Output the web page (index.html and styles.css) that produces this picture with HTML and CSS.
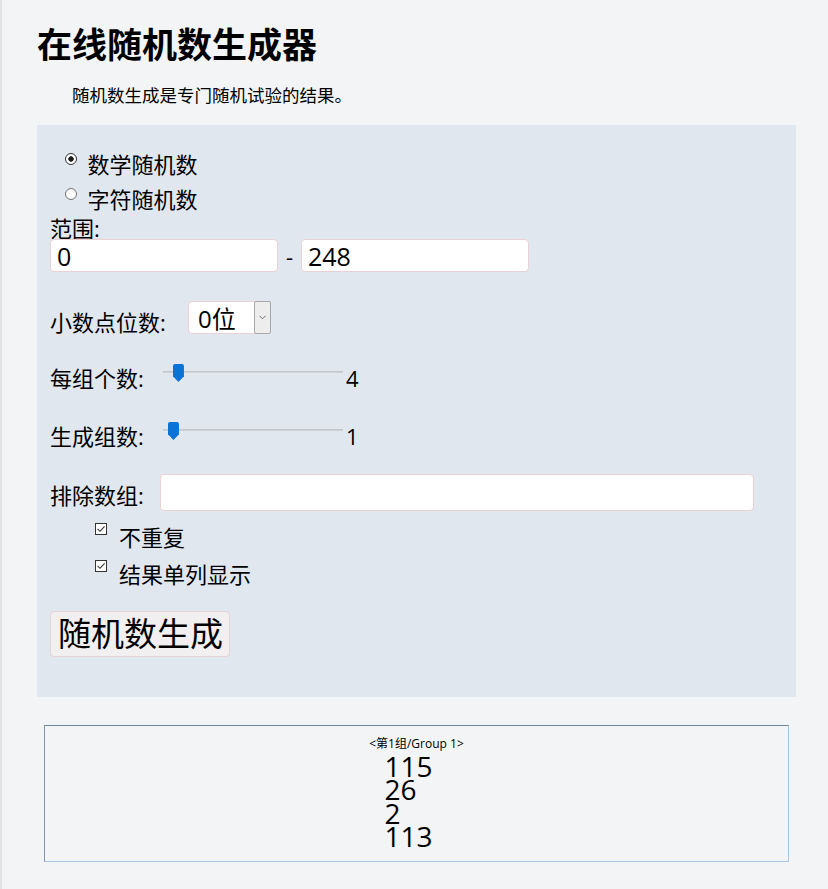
FILE: index.html
```html
<!DOCTYPE html>
<html lang="zh-CN">
<head>
<meta charset="utf-8">
<title>在线随机数生成器</title>
<link rel="stylesheet" href="styles.css">
</head>
<body>
<div class="page">
  <div class="wrap">
    <h1 class="title">在线随机数生成器</h1>
    <p class="intro">随机数生成是专门随机试验的结果。</p>
    <form class="panel">
      <label class="radio-row"><input type="radio" name="kind" class="radio" checked><span>数学随机数</span></label>
      <label class="radio-row"><input type="radio" name="kind" class="radio"><span>字符随机数</span></label>
      <div class="range-label">范围:</div>
      <div class="range-row">
        <input class="field field-range" value="0">
        <span class="dash">-</span>
        <input class="field field-range" value="248">
      </div>
      <div class="row row-select">
        <span class="lbl lbl-select">小数点位数:</span>
        <span class="select-wrap">
          <select class="select"><option>0位</option></select>
          <span class="select-btn"><svg width="7" height="5" viewBox="0 0 7 5"><path d="M0.5 0.8 L3.5 3.8 L6.5 0.8" fill="none" stroke="#6a6a6a" stroke-width="1"/></svg></span>
        </span>
      </div>
      <div class="row row-slider">
        <span class="lbl lbl-slider">每组个数:</span>
        <input type="range" class="slider" min="0" max="68" value="4">
        <span class="val">4</span>
      </div>
      <div class="row row-slider2">
        <span class="lbl lbl-slider">生成组数:</span>
        <input type="range" class="slider" min="0" max="34" value="1">
        <span class="val">1</span>
      </div>
      <div class="row row-exclude">
        <span class="lbl lbl-exclude">排除数组:</span>
        <input class="field field-wide" value="">
      </div>
      <label class="check-row check-first"><input type="checkbox" class="hidden-input" checked><span class="box"><svg width="10" height="10" viewBox="0 0 10 10"><path d="M1.5 4.8 L4 7.3 L8.6 2.4" fill="none" stroke="#333" stroke-width="1.1"/></svg></span><span>不重复</span></label>
      <label class="check-row"><input type="checkbox" class="hidden-input" checked><span class="box"><svg width="10" height="10" viewBox="0 0 10 10"><path d="M1.5 4.8 L4 7.3 L8.6 2.4" fill="none" stroke="#333" stroke-width="1.1"/></svg></span><span>结果单列显示</span></label>
      <button type="button" class="btn">随机数生成</button>
    </form>
    <div class="result">
      <div class="group">&lt;第1组/Group 1&gt;</div>
      <div class="nums">
        <div>115</div>
        <div>26</div>
        <div>2</div>
        <div>113</div>
      </div>
    </div>
  </div>
</div>
</body>
</html>
```
FILE: styles.css
```css
html, body {
  margin: 0;
  background: #f3f4f6;
}
body {
  font-family: "Open Sans", "Noto Sans CJK SC", sans-serif;
  color: #000;
}
.page {
  border-left: 2px solid #e1e2e4;
  min-height: 889px;
  padding-left: 35px;
  box-sizing: border-box;
}
.wrap {
  width: 759px;
}
.title {
  margin: 0;
  padding-top: 25px;
  font-size: 35px;
  line-height: 40px;
  font-weight: 700;
}
.intro {
  margin: 17.5px 0 0 35px;
  font-size: 17.5px;
  line-height: 24px;
}
.panel {
  margin-top: 18.5px;
  background: #e1e7ef;
  padding: 22px 0 40px 13px;
}
.radio-row {
  display: flex;
  align-items: flex-start;
  height: 35px;
  font-size: 22px;
  line-height: 35px;
}
.radio {
  appearance: none;
  -webkit-appearance: none;
  box-sizing: border-box;
  width: 12px;
  height: 12px;
  margin: 5.5px 11px 0 14.5px;
  border: 1px solid #707070;
  border-radius: 50%;
  background: #fff;
}
.radio:checked {
  border-color: #333;
  background: radial-gradient(circle, #1c1c1c 0 2.4px, #fff 3px);
}
.range-label {
  font-size: 22px;
  line-height: 22px;
  height: 22px;
}
.range-row {
  display: flex;
  align-items: center;
}
.field {
  box-sizing: border-box;
  height: 33px;
  border: 1px solid #ebd0d4;
  border-radius: 4px;
  background: #fff;
  font-family: inherit;
  font-size: 25px;
  padding: 0 6px;
  color: #000;
  outline: none;
}
.field-range {
  width: 228px;
}
.dash {
  font-size: 22px;
  width: 7px;
  margin: 0 8px;
}
.row {
  display: flex;
  align-items: center;
  font-size: 22px;
}
.lbl {
  line-height: 22px;
  white-space: nowrap;
}
.row-select {
  margin-top: 29px;
  height: 33px;
}
.lbl-select {
  width: 138px;
  margin-top: 9px;
}
.select-wrap {
  position: relative;
  width: 83px;
  height: 33px;
}
.select {
  appearance: none;
  -webkit-appearance: none;
  box-sizing: border-box;
  width: 100%;
  height: 100%;
  border: 1px solid #ebd0d4;
  border-radius: 4px;
  background: #fff;
  font-family: inherit;
  font-size: 24px;
  padding: 0 0 0 9px;
  color: #000;
  outline: none;
}
.select-btn {
  position: absolute;
  right: 0;
  top: 0;
  bottom: 0;
  width: 17px;
  box-sizing: border-box;
  border: 1px solid #a9a9a9;
  border-radius: 2px;
  background: #ededed;
  display: flex;
  align-items: center;
  justify-content: center;
  pointer-events: none;
}
.row-slider {
  margin-top: 29px;
}
.row-slider2 {
  margin-top: 28px;
}
.lbl-slider {
  width: 113px;
}
.slider {
  appearance: none;
  -webkit-appearance: none;
  width: 180px;
  height: 18px;
  margin: 0 0 12px 0;
  padding: 0;
  background: transparent;
}
.slider::-webkit-slider-runnable-track {
  height: 2px;
  background: #cfd3d8;
  border-top: 1px solid #c3c7cc;
  box-sizing: border-box;
}
.slider::-webkit-slider-thumb {
  -webkit-appearance: none;
  appearance: none;
  width: 11px;
  height: 18px;
  margin-top: -8px;
  background: #0a73d5;
  border-radius: 2px 2px 0 0;
  clip-path: polygon(0 0, 100% 0, 100% 68%, 50% 100%, 0 68%);
}
.val {
  margin-left: 3px;
  font-size: 22px;
}
.row-exclude {
  margin-top: 23px;
}
.lbl-exclude {
  width: 110px;
  margin-top: 5px;
}
.field-wide {
  width: 594px;
  height: 37px;
}
.check-row {
  display: flex;
  align-items: flex-start;
  height: 37px;
  line-height: 37px;
  font-size: 22px;
  margin-left: 45px;
}
.check-first {
  margin-top: 7.5px;
}
.hidden-input {
  position: absolute;
  opacity: 0;
  width: 0;
  height: 0;
  margin: 0;
}
.box {
  box-sizing: border-box;
  width: 12px;
  height: 12px;
  margin: 4.5px 12px 0 0;
  border: 1px solid #333;
  background: #fff;
  display: flex;
  align-items: center;
  justify-content: center;
}
.btn {
  display: block;
  margin-top: 18.5px;
  width: 180px;
  height: 46px;
  box-sizing: border-box;
  padding: 0 0 0 7px;
  text-align: left;
  font-family: inherit;
  font-size: 33px;
  line-height: 44px;
  color: #000;
  background: #f1efef;
  border: 1px solid #e6d2d4;
  border-radius: 4px;
}
.result {
  margin: 28px 0 0 7px;
  width: 745px;
  height: 137px;
  box-sizing: border-box;
  border: 1px solid;
  border-color: #71869a #a9c6e2 #a9c6e2 #8196aa;
  padding-top: 9.5px;
}
.group {
  font-size: 12px;
  line-height: 16px;
  text-align: center;
}
.nums {
  margin: 3px 0 0 calc(50% - 32px);
  font-size: 28px;
  line-height: 23.5px;
}
```
